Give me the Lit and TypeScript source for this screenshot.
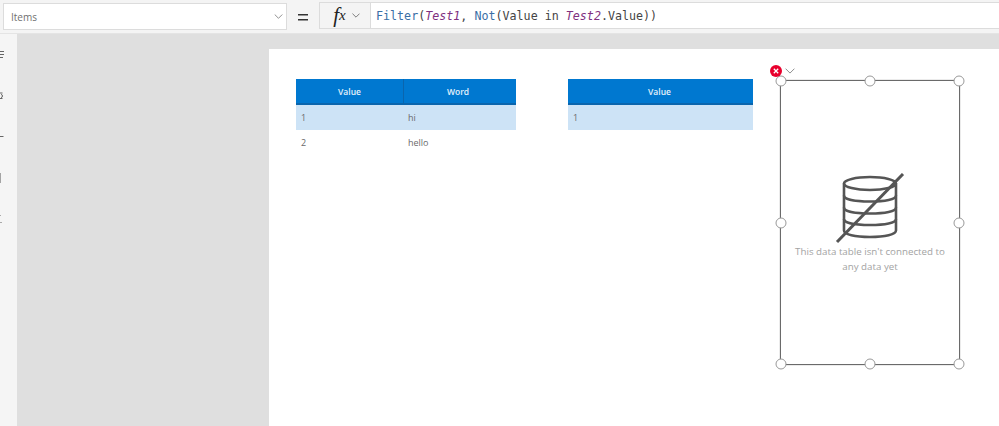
import { LitElement, html, css } from "lit";
import { customElement } from "lit/decorators.js";

const chevron = (w: number, h: number, color: string) => html`<svg width=${w} height=${h} viewBox="0 0 12 7"><path d="M.7.7 6 6 11.3.7" fill="none" stroke=${color} stroke-width="1"/></svg>`;

@customElement("app-root")
export class AppRoot extends LitElement {
  static styles = css`
    :host { display: block; width: 999px; height: 426px; overflow: hidden; background: #f3f3f3; font-family: "Open Sans", "Liberation Sans", sans-serif; }
    .bar { height: 34px; box-sizing: border-box; display: flex; align-items: flex-start; padding: 3px 0 0 3px; background: #f4f4f4; border-bottom: 1px solid #e4e4e4; }
    .prop { width: 284px; height: 27px; box-sizing: border-box; border: 1px solid #dcdcdc; background: #fff; display: flex; align-items: center; justify-content: space-between; padding: 0 3px 0 7px; font-size: 10px; color: #707070; }
    .eq { width: 32px; height: 27px; box-sizing: border-box; padding-top: 3px; display: flex; align-items: center; justify-content: center; }
    .eq svg { display: block; }
    .fx { width: 51px; height: 27px; box-sizing: border-box; margin-top: -1px; border: 1px solid #dcdcdc; border-right: none; background: #f4f4f4; display: flex; align-items: center; justify-content: center; gap: 6px; padding-left: 3px; color: #222; }
    .fx i { font: italic 21px/1 "Liberation Serif", serif; display: flex; align-items: baseline; }
    .fx i small { font-size: 15px; position: relative; top: -2px; }
    .formula { flex: 1; height: 27px; box-sizing: border-box; margin-top: -1px; border: 1px solid #dcdcdc; border-right: none; background: #fff; display: flex; align-items: center; padding: 1px 0 0 5px; font: 11.68px "DejaVu Sans Mono", "Liberation Mono", monospace; color: #444; white-space: pre; }
    .fn { color: #3a6ea5; }
    .ds { color: #80307f; font-style: italic; }
    .main { display: flex; height: 392px; }
    .rail { width: 17px; box-sizing: border-box; background: #f5f5f5; overflow: hidden; }
    .rail svg { display: block; }
    .stage { flex: 1; background: #dfdfdf; padding: 15px 0 0 252px; }
    .canvas { position: relative; width: 730px; height: 377px; background: #fff; }
    .table { position: absolute; top: 30px; font-size: 9px; color: #6a6a6a; }
    .t1 { left: 27px; width: 220px; }
    .t2 { left: 299px; width: 185px; }
    .head { display: flex; height: 26px; box-sizing: border-box; background: #0078d0; color: #e4f1fb; font-size: 8.5px; font-weight: 600; border-bottom: 2px solid #0a65ad; }
    .head div { flex: 1; display: flex; align-items: center; justify-content: center; }
    .t1 .head div:first-child { flex: none; width: 108px; border-right: 1px solid #0a65ad; box-sizing: border-box; }
    .t1 .head div:last-child { padding-right: 4px; }
    .t2 .head div { padding-right: 2px; }
    .row { display: flex; height: 25px; align-items: center; }
    .row.sel { background: #cde3f6; }
    .row div { box-sizing: border-box; padding-left: 5px; }
    .t1 .row div:first-child { width: 107px; }
    .selbox { position: absolute; left: 511px; top: 31px; width: 180px; height: 285px; box-sizing: border-box; border: 1px solid #6a6a6a; box-shadow: 0 0 1px #888; display: flex; flex-direction: column; align-items: center; padding-top: 92px; }
    .msg { width: 160px; text-align: center; font-size: 9.75px; line-height: 15px; color: #a3a3a3; }
    .selbox svg.db { display: block; margin-bottom: -1px; }
    .h { position: absolute; width: 11px; height: 11px; box-sizing: border-box; border-radius: 50%; background: #fff; border: 1.3px solid #999; transform: translate(-50%, -50%); }
    .err { position: absolute; left: 501px; top: 16px; width: 12px; height: 12px; border-radius: 50%; background: #e8002d; display: flex; align-items: center; justify-content: center; }
    .err svg { display: block; }
    .menu { position: absolute; left: 516px; top: 19px; display: flex; }
  `;

  render() {
    const handles = [[0,0],[50,0],[100,0],[0,50],[100,50],[0,100],[50,100],[100,100]];
    return html`
      <div class="bar">
        <div class="prop"><span>Items</span>${chevron(9, 5, "#666")}</div>
        <div class="eq"><svg width="11" height="8"><rect y="0" width="10" height="1.5" fill="#333"/><rect y="5" width="10" height="1.5" fill="#333"/></svg></div>
        <div class="fx"><i>f<small>x</small></i>${chevron(8, 5, "#444")}</div>
        <div class="formula"><span class="fn">Filter</span>(<span class="ds">Test1</span>, <span class="fn">Not</span>(Value in <span class="ds">Test2</span>.Value))</div>
      </div>
      <div class="main">
        <div class="rail">
          <svg width="17" height="200" viewBox="0 0 17 200">
            <g fill="none" stroke="#666" stroke-width="1">
              <path d="M0 17.500H4M0 20.500H4M0 23.500H3"/>
              <path d="M0 59H2.500M0 64.500H2.500M1 60.500a1.500 1.500 0 1 1 0 3" />
              <path d="M0 102.500H3.500"/>
              <path d="M0 139V149" stroke-width="1.500" stroke="#888"/>
              <path d="M0 188.500H2M0 181.500H1" stroke="#aaa"/>
            </g>
          </svg>
        </div>
        <div class="stage">
          <div class="canvas">
            <div class="table t1">
              <div class="head"><div>Value</div><div>Word</div></div>
              <div class="row sel"><div>1</div><div>hi</div></div>
              <div class="row"><div>2</div><div>hello</div></div>
            </div>
            <div class="table t2">
              <div class="head"><div>Value</div></div>
              <div class="row sel"><div>1</div></div>
            </div>
            <div class="selbox">
              <svg class="db" width="72" height="72" viewBox="0 0 72 72">
                <g fill="none" stroke="#555" stroke-width="2.600">
                  <ellipse cx="36" cy="10.500" rx="26" ry="6.500"/>
                  <path d="M10 10.500V57.500C10 61.500 21 64 36 64S62 61.500 62 57.500V10.500"/>
                  <path d="M10 22.500C10 26.500 21 28.500 36 28.500S62 26.500 62 22.500"/>
                  <path d="M10 34.500C10 38.500 21 40.500 36 40.500S62 38.500 62 34.500"/>
                  <path d="M10 46C10 50 21 52 36 52S62 50 62 46"/>
                </g>
                <path d="M69 1 3 69" stroke="#555" stroke-width="3"/>
              </svg>
              <div class="msg">This data table isn't connected to any data yet</div>
              ${handles.map(([x, y]) => html`<span class="h" style="left:${x}%;top:${y}%"></span>`)}
            </div>
            <div class="err"><svg width="6" height="6" viewBox="0 0 6 6"><path d="M.8.8 5.200 5.200M5.200.8.8 5.200" stroke="#fff" stroke-width="1.300"/></svg></div>
            <div class="menu">${chevron(10, 6, "#777")}</div>
          </div>
        </div>
      </div>
    `;
  }
}
